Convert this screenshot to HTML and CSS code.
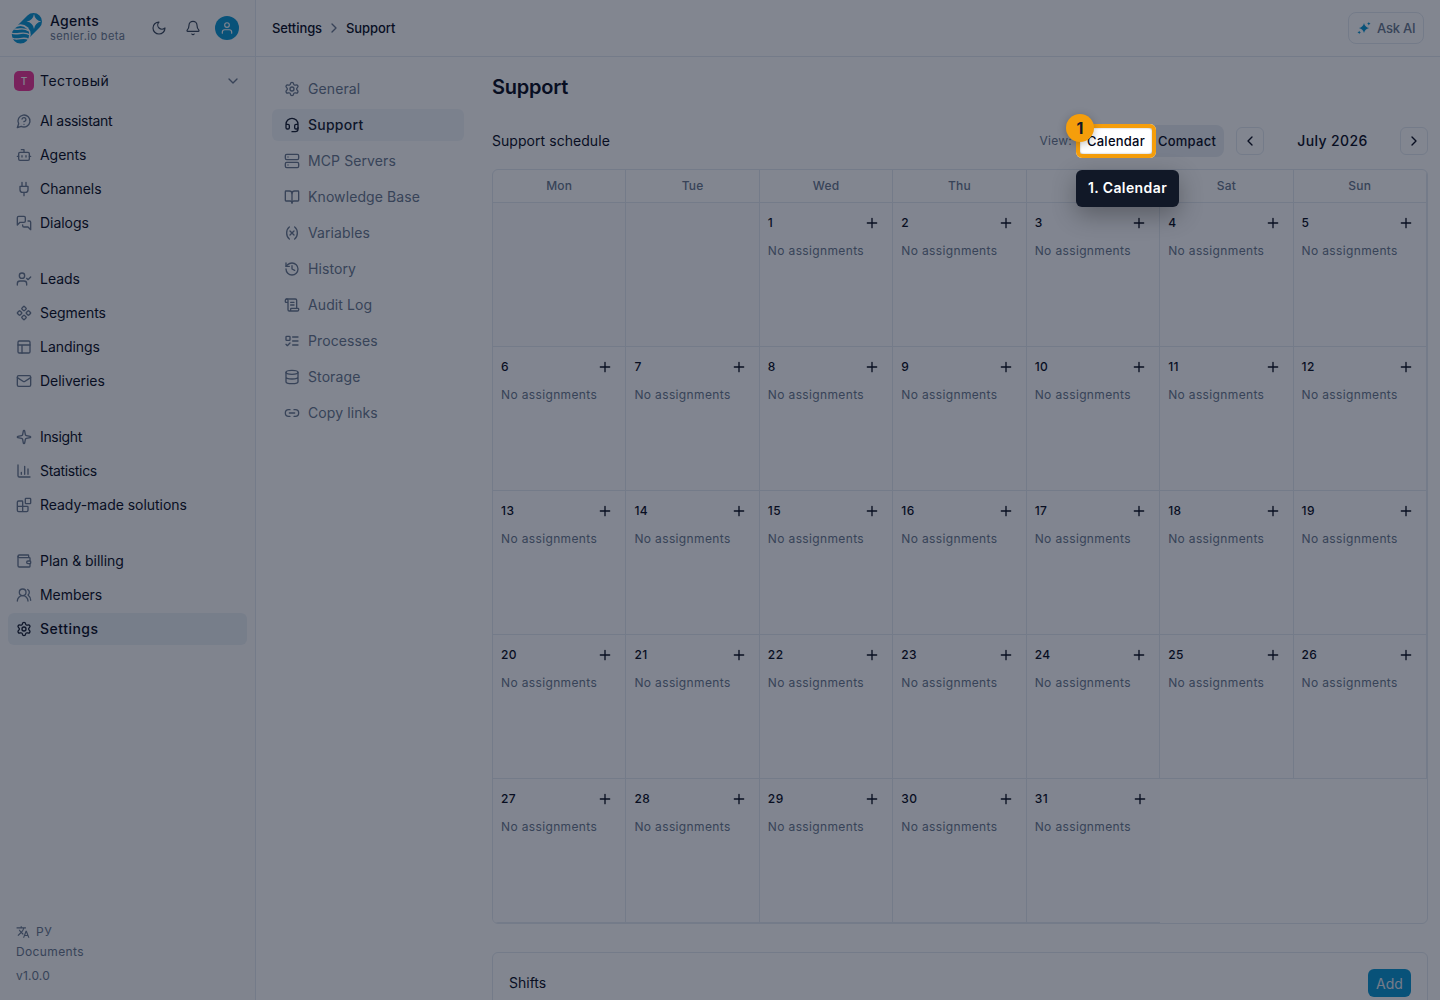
FILE: index.html
```
<!DOCTYPE html>
<html lang="en">
<head>
<meta charset="UTF-8">
<meta name="viewport" content="width=device-width, initial-scale=1.0">
<title>Support - Agents</title>
<link rel="stylesheet" href="styles.css">
</head>
<body>

<div class="app">
    <aside class="sidebar">
        <div class="brand">
            <svg class="logo" viewBox="0 0 32 32">
                <path class="capsule" d="M9.500 22.500L22.500 9.500"/>
                <circle class="cut" cx="9.500" cy="22.500" r="10.200"/>
                <circle class="fill" cx="9.500" cy="22.800" r="8.700"/>
                <path class="wave" d="M2 16.700C7 18.700 12 14.500 17.500 18.700M0 20.800C6 24.300 12 18 19 23M1 26C7 29.500 12 23.500 17.500 27.500"/>
                <path class="cut" d="M23 2Q24 8.500 30.500 9.500Q24 10.500 23 17Q22 10.500 15.500 9.500Q22 8.500 23 2Z"/>
            </svg>
            <div class="brand-text">
                <b>Agents</b>
                <span>senler.io beta</span>
            </div>
            <svg class="icon moon" viewBox="0 0 24 24"><path d="M12 3a6 6 0 0 0 9 9 9 9 0 1 1-9-9Z"/></svg>
            <svg class="icon bell" viewBox="0 0 24 24"><path d="M10.268 21a2 2 0 0 0 3.464 0"/><path d="M3.262 15.326A1 1 0 0 0 4 17h16a1 1 0 0 0 .74-1.673C19.410 13.956 18 12.499 18 8A6 6 0 0 0 6 8c0 4.499-1.411 5.956-2.738 7.326"/></svg>
            <div class="avatar"><svg class="icon" viewBox="0 0 24 24"><circle cx="12" cy="7" r="4"/><path d="M4 21v-2a4 4 0 0 1 4-4h8a4 4 0 0 1 4 4v2"/></svg></div>
        </div>

        <div class="workspace">
            <span class="badge">T</span>
            <span class="workspace-name">Тестовый</span>
            <svg class="icon" viewBox="0 0 24 24"><path d="m6 9 6 6 6-6"/></svg>
        </div>

        <nav class="menu">
            <div class="group">
                <a class="item tight"><svg class="icon" viewBox="0 0 24 24"><path d="M7.900 20A9 9 0 1 0 4 16.100L2 22Z"/><path d="M9.090 9a3 3 0 0 1 5.830 1c0 2-3 3-3 3"/><path d="M12 17h.01"/></svg>AI assistant</a>
                <a class="item"><svg class="icon" viewBox="0 0 24 24"><path d="M12 8V4H8"/><rect x="4" y="8" width="16" height="12" rx="2"/><path d="M2 14h2M20 14h2M15 13v2M9 13v2"/></svg>Agents</a>
                <a class="item"><svg class="icon" viewBox="0 0 24 24"><path d="M12 22v-5M9 8V2M15 8V2"/><path d="M18 8v5a4 4 0 0 1-4 4h-4a4 4 0 0 1-4-4V8Z"/></svg>Channels</a>
                <a class="item"><svg class="icon" viewBox="0 0 24 24"><path d="M14 9a2 2 0 0 1-2 2H6l-4 4V4a2 2 0 0 1 2-2h8a2 2 0 0 1 2 2Z"/><path d="M18 9h2a2 2 0 0 1 2 2v11l-4-4h-6a2 2 0 0 1-2-2v-1"/></svg>Dialogs</a>
            </div>
            <div class="group">
                <a class="item"><svg class="icon" viewBox="0 0 24 24"><path d="m16 11 2 2 4-4"/><path d="M16 21v-2a4 4 0 0 0-4-4H6a4 4 0 0 0-4 4v2"/><circle cx="9" cy="7" r="4"/></svg>Leads</a>
                <a class="item"><svg class="icon" viewBox="0 0 24 24"><path d="M15.536 11.293a1 1 0 0 0 0 1.414l2.376 2.377a1 1 0 0 0 1.414 0l2.377-2.377a1 1 0 0 0 0-1.414l-2.377-2.377a1 1 0 0 0-1.414 0z"/><path d="M2.297 11.293a1 1 0 0 0 0 1.414l2.377 2.377a1 1 0 0 0 1.414 0l2.377-2.377a1 1 0 0 0 0-1.414L6.088 8.916a1 1 0 0 0-1.414 0z"/><path d="M8.916 17.912a1 1 0 0 0 0 1.415l2.377 2.376a1 1 0 0 0 1.414 0l2.377-2.376a1 1 0 0 0 0-1.415l-2.377-2.376a1 1 0 0 0-1.414 0z"/><path d="M8.916 4.674a1 1 0 0 0 0 1.414l2.377 2.376a1 1 0 0 0 1.414 0l2.377-2.376a1 1 0 0 0 0-1.414l-2.377-2.377a1 1 0 0 0-1.414 0z"/></svg>Segments</a>
                <a class="item"><svg class="icon" viewBox="0 0 24 24"><rect x="3" y="3" width="18" height="18" rx="2"/><path d="M3 9h18M9 21V9"/></svg>Landings</a>
                <a class="item"><svg class="icon" viewBox="0 0 24 24"><rect x="2" y="4" width="20" height="16" rx="2"/><path d="m22 7-8.970 5.700a1.940 1.940 0 0 1-2.060 0L2 7"/></svg>Deliveries</a>
            </div>
            <div class="group">
                <a class="item tight"><svg class="icon" viewBox="0 0 24 24"><path d="M11.017 2.814a1 1 0 0 1 1.966 0l1.051 5.558a2 2 0 0 0 1.594 1.594l5.558 1.051a1 1 0 0 1 0 1.966l-5.558 1.051a2 2 0 0 0-1.594 1.594l-1.051 5.558a1 1 0 0 1-1.966 0l-1.051-5.558a2 2 0 0 0-1.594-1.594l-5.558-1.051a1 1 0 0 1 0-1.966l5.558-1.051a2 2 0 0 0 1.594-1.594z"/></svg>Insight</a>
                <a class="item tight"><svg class="icon" viewBox="0 0 24 24"><path d="M3 3v16a2 2 0 0 0 2 2h16M13 17V5M18 17V9M8 17v-3"/></svg>Statistics</a>
                <a class="item"><svg class="icon" viewBox="0 0 24 24"><path d="M10 22V7a1 1 0 0 0-1-1H4a2 2 0 0 0-2 2v12a2 2 0 0 0 2 2h12a2 2 0 0 0 2-2v-5a1 1 0 0 0-1-1H2"/><rect x="14" y="2" width="8" height="8" rx="1"/></svg>Ready-made solutions</a>
            </div>
            <div class="group">
                <a class="item"><svg class="icon" viewBox="0 0 24 24"><path d="M19 7V4a1 1 0 0 0-1-1H5a2 2 0 0 0 0 4h15a1 1 0 0 1 1 1v4h-3a2 2 0 0 0 0 4h3a1 1 0 0 0 1-1v-2a1 1 0 0 0-1-1"/><path d="M3 5v14a2 2 0 0 0 2 2h15a1 1 0 0 0 1-1v-4"/></svg>Plan &amp; billing</a>
                <a class="item"><svg class="icon" viewBox="0 0 24 24"><path d="M18 21a8 8 0 0 0-16 0"/><circle cx="10" cy="8" r="5"/><path d="M22 20c0-3.370-2-6.500-4-8a5 5 0 0 0-.450-8.300"/></svg>Members</a>
                <a class="item active"><svg class="icon" viewBox="0 0 24 24"><use href="#gear"/></svg>Settings</a>
            </div>
        </nav>

        <div class="footer">
            <div class="lang"><svg viewBox="0 0 24 24"><path d="M12.870 15.070l-2.540-2.510.03-.03A17.520 17.520 0 0 0 14.070 6H17V4h-7V2H8v2H1v2h11.170C11.500 7.920 10.440 9.750 9 11.350 8.070 10.320 7.300 9.190 6.690 8h-2c.73 1.630 1.730 3.170 2.980 4.560l-5.090 5.020L4 19l5-5 3.110 3.110.76-2.040zM18.500 10h-2L12 22h2l1.120-3h4.750L21 22h2l-4.500-12zm-2.620 7l1.620-4.330L19.120 17h-3.240z"/></svg>РУ</div>
            <div class="docs">Documents</div>
            <div class="version">v1.0.0</div>
        </div>
    </aside>

    <main class="main">
        <header class="topbar">
            <div class="crumbs">
                <span>Settings</span>
                <svg class="icon" viewBox="0 0 24 24"><path d="m9 18 6-6-6-6"/></svg>
                <span>Support</span>
            </div>
            <button class="ask"><svg viewBox="0 0 16 16"><path d="M8 2.200Q9 7 13.800 8Q9 9 8 13.800Q7 9 2.200 8Q7 7 8 2.200ZM13.500 1l.6 1.400 1.400.6-1.400.6-.6 1.400-.6-1.400L11.500 3l1.400-.6ZM2.500 11l.6 1.400 1.400.6-1.400.6-.6 1.400-.6-1.400L.5 13l1.400-.6Z"/></svg>Ask AI</button>
        </header>

        <div class="content">
            <nav class="subnav">
                <a class="item"><svg class="icon" viewBox="0 0 24 24"><g id="gear"><path d="M9.671 4.136a2.340 2.340 0 0 1 4.659 0 2.340 2.340 0 0 0 3.319 1.915 2.340 2.340 0 0 1 2.330 4.033 2.340 2.340 0 0 0 0 3.831 2.340 2.340 0 0 1-2.330 4.033 2.340 2.340 0 0 0-3.319 1.915 2.340 2.340 0 0 1-4.659 0 2.340 2.340 0 0 0-3.320-1.915 2.340 2.340 0 0 1-2.330-4.033 2.340 2.340 0 0 0 0-3.831A2.340 2.340 0 0 1 6.350 6.051a2.340 2.340 0 0 0 3.319-1.915"/><circle cx="12" cy="12" r="3"/></g></svg>General</a>
                <a class="item active"><svg class="icon" viewBox="0 0 24 24"><path d="M3 11h3a2 2 0 0 1 2 2v3a2 2 0 0 1-2 2H5a2 2 0 0 1-2-2v-5Zm0 0a9 9 0 1 1 18 0m0 0v5a2 2 0 0 1-2 2h-1a2 2 0 0 1-2-2v-3a2 2 0 0 1 2-2h3Z"/><path d="M21 16v2a4 4 0 0 1-4 4h-5"/></svg>Support</a>
                <a class="item"><svg class="icon" viewBox="0 0 24 24"><rect x="2" y="2" width="20" height="8" rx="2"/><rect x="2" y="14" width="20" height="8" rx="2"/><path d="M6 6h.01M6 18h.01"/></svg>MCP Servers</a>
                <a class="item"><svg class="icon" viewBox="0 0 24 24"><path d="M12 7v14"/><path d="M3 18a1 1 0 0 1-1-1V4a1 1 0 0 1 1-1h5a4 4 0 0 1 4 4 4 4 0 0 1 4-4h5a1 1 0 0 1 1 1v13a1 1 0 0 1-1 1h-6a3 3 0 0 0-3 3 3 3 0 0 0-3-3z"/></svg>Knowledge Base</a>
                <a class="item"><svg class="icon" viewBox="0 0 24 24"><path d="M8 21s-4-3-4-9 4-9 4-9M16 3s4 3 4 9-4 9-4 9M15 9l-6 6M9 9l6 6"/></svg>Variables</a>
                <a class="item"><svg class="icon" viewBox="0 0 24 24"><path d="M3 12a9 9 0 1 0 9-9 9.750 9.750 0 0 0-6.740 2.740L3 8"/><path d="M3 3v5h5M12 7v5l4 2"/></svg>History</a>
                <a class="item"><svg class="icon" viewBox="0 0 24 24"><path d="M15 12h-5M15 8h-5M19 17V5a2 2 0 0 0-2-2H4"/><path d="M8 21h12a2 2 0 0 0 2-2v-1a1 1 0 0 0-1-1H11a1 1 0 0 0-1 1v1a2 2 0 1 1-4 0V5a2 2 0 1 0-4 0v2a1 1 0 0 0 1 1h3"/></svg>Audit Log</a>
                <a class="item"><svg class="icon" viewBox="0 0 24 24"><rect x="3" y="5" width="6" height="6" rx="1"/><path d="m3 17 2 2 4-4M13 6h8M13 12h8M13 18h8"/></svg>Processes</a>
                <a class="item"><svg class="icon" viewBox="0 0 24 24"><ellipse cx="12" cy="5" rx="9" ry="3"/><path d="M3 5v14a9 3 0 0 0 18 0V5M3 12a9 3 0 0 0 18 0"/></svg>Storage</a>
                <a class="item"><svg class="icon" viewBox="0 0 24 24"><path d="M9 17H7A5 5 0 0 1 7 7h2M15 7h2a5 5 0 1 1 0 10h-2M8 12h8"/></svg>Copy links</a>
            </nav>

            <section class="page">
                <h1>Support</h1>
                <div class="toolbar">
                    <span class="toolbar-title">Support schedule</span>
                    <span class="view">View:</span>
                    <div class="toggle">
                        <button class="on">Calendar
                            <span class="spotlight"></span>
                            <span class="step">1</span>
                            <span class="tip">1. Calendar</span>
                        </button>
                        <button>Compact</button>
                    </div>
                    <button class="arrow"><svg class="icon" viewBox="0 0 24 24"><path d="m15 18-6-6 6-6"/></svg></button>
                    <span class="month">July 2026</span>
                    <button class="arrow"><svg class="icon" viewBox="0 0 24 24"><path d="m9 18 6-6-6-6"/></svg></button>
                </div>

                <div class="calendar" id="calendar"></div>

                <div class="shifts">
                    <span>Shifts</span>
                    <button>Add</button>
                </div>
            </section>
        </div>
    </main>
</div>

<script>
    var calendar = document.getElementById("calendar");
    var html = "";
    ["Mon", "Tue", "Wed", "Thu", "Fri", "Sat", "Sun"].forEach(function(name) {
        html += '<div class="weekday">' + name + '</div>';
    });

    // July 2026 starts on Wednesday
    html += '<div class="day empty"></div><div class="day empty"></div>';
    for (var d = 1; d <= 31; d++) {
        html += '<div class="day"><div class="day-head"><span>' + d + '</span>' +
            '<svg class="icon" viewBox="0 0 24 24"><path d="M5 12h14M12 5v14"/></svg></div>' +
            '<p>No assignments</p></div>';
    }
    calendar.innerHTML = html;
</script>

</body>
</html>
```
FILE: styles.css
```
* {
    box-sizing: border-box;
}
body {
    font-family: Inter, "Noto Sans", sans-serif;
    font-size: 14px;
    line-height: 20px;
    color: #020617;
    margin: 0;
    height: 100vh;
    overflow: hidden;
}
button {
    font-family: inherit;
    color: inherit;
    background: none;
    border: none;
    padding: 0;
}
.icon {
    width: 16px;
    height: 16px;
    flex: none;
    fill: none;
    stroke: currentColor;
    stroke-width: 2;
    stroke-linecap: round;
    stroke-linejoin: round;
}
.app {
    display: flex;
    height: 100vh;
    overflow: hidden;
}

/* Sidebar */
.sidebar {
    width: 256px;
    flex: none;
    display: flex;
    flex-direction: column;
    background: #fafafa;
    border-right: 1px solid #e2e8f0;
}
.brand {
    height: 57px;
    flex: none;
    display: flex;
    align-items: center;
    padding: 0 16px 1px 11px;
    border-bottom: 1px solid #e2e8f0;
}
.logo {
    width: 32px;
    height: 32px;
}
.fill {
    fill: #0092d0;
}
.capsule {
    stroke: #0092d0;
    stroke-width: 17;
    stroke-linecap: round;
}
.cut {
    fill: #fafafa;
}
.wave {
    fill: none;
    stroke: #fafafa;
    stroke-width: 1.4;
}
.brand-text {
    flex: 1;
    margin-left: 7px;
    padding-top: 2px;
}
.brand-text b {
    display: block;
    font-weight: 500;
    line-height: 16px;
    letter-spacing: 0.3px;
}
.brand-text span {
    display: block;
    font-size: 11px;
    line-height: 15px;
    letter-spacing: 0.4px;
    color: #64748b;
}
.moon, .bell {
    color: #334155;
    stroke-width: 1.75;
    margin-right: 18px;
}
.bell {
    margin-right: 14px;
}
.avatar {
    width: 24px;
    height: 24px;
    border-radius: 50%;
    background: #0092d0;
    color: #fafafa;
    display: flex;
    align-items: center;
    justify-content: center;
}
.avatar .icon {
    width: 14px;
    height: 14px;
}
.workspace {
    display: flex;
    align-items: center;
    height: 32px;
    margin-top: 8px;
    padding: 0 14px;
    color: #64748b;
}
.badge {
    width: 20px;
    height: 20px;
    border-radius: 5px;
    background: #ec2f92;
    color: #fafafa;
    font-size: 10px;
    font-weight: 500;
    text-align: center;
}
.workspace-name {
    flex: 1;
    margin-left: 6px;
    letter-spacing: 0.5px;
    color: #020617;
}
.menu {
    display: flex;
    flex-direction: column;
    gap: 24px;
    padding: 8px;
}
.group {
    display: flex;
    flex-direction: column;
    gap: 2px;
}
.item {
    display: flex;
    align-items: center;
    gap: 8px;
    height: 32px;
    padding: 0 8px;
    border-radius: 6px;
    letter-spacing: -0.04px;
}
.item.tight {
    letter-spacing: -0.33px;
}
.item .icon {
    color: #64748b;
}
.item.active {
    background: #e8eef3;
    font-weight: 500;
    letter-spacing: 0.5px;
}
.item.active .icon {
    color: #0f172a;
}
.footer {
    margin-top: auto;
    padding: 0 16px 12px;
    font-size: 12px;
    line-height: 24px;
    letter-spacing: 0.38px;
    color: #64748b;
}
.lang {
    display: flex;
    align-items: center;
    gap: 6px;
    height: 16px;
    letter-spacing: 0.7px;
}
.lang svg {
    width: 14px;
    height: 14px;
    fill: currentColor;
}
.version {
    letter-spacing: 0.2px;
}

/* Main */
.main {
    flex: 1;
    min-width: 0;
}
.topbar {
    height: 57px;
    display: flex;
    align-items: center;
    justify-content: space-between;
    padding: 0 16px;
    border-bottom: 1px solid #e2e8f0;
}
.crumbs {
    display: flex;
    align-items: center;
    gap: 4px;
    font-size: 13px;
    font-weight: 500;
    letter-spacing: -0.08px;
}
.crumbs .icon {
    color: #64748b;
}
.ask {
    display: flex;
    align-items: center;
    gap: 6px;
    height: 32px;
    width: 76px;
    padding: 0 8px;
    border: 1px solid #e2e8f0;
    border-radius: 8px;
    font-size: 13px;
    font-weight: 500;
    letter-spacing: -0.2px;
    color: #64748b;
    white-space: nowrap;
}
.ask svg {
    width: 14px;
    height: 14px;
    flex: none;
    fill: #0092d0;
}
.content {
    display: flex;
    padding: 16px 12px 0 16px;
}
.subnav {
    width: 192px;
    flex: none;
    display: flex;
    flex-direction: column;
    gap: 4px;
    margin-right: 28px;
}
.subnav .item {
    color: #64748b;
    padding: 0 12px;
    letter-spacing: 0.1px;
}
.subnav .item.active {
    color: #0f172a;
    background: #f1f5f9;
    letter-spacing: 0.25px;
}
.page {
    flex: 1;
    min-width: 0;
}
h1 {
    margin: 0;
    font-size: 20px;
    line-height: 28px;
    font-weight: 600;
    letter-spacing: -0.25px;
}
.toolbar {
    display: flex;
    align-items: center;
    height: 32px;
    margin: 24px 0 12px;
}
.toolbar-title {
    flex: 1;
    letter-spacing: 0.05px;
}
.view {
    font-size: 12px;
    letter-spacing: 0.25px;
    color: #64748b;
    margin-right: 4px;
}
.toggle {
    display: flex;
    width: 148px;
    height: 32px;
    padding: 3px;
    border-radius: 8px;
    background: #e8edf2;
}
.toggle button {
    flex: 1;
    font-size: 13px;
    font-weight: 500;
    letter-spacing: 0.25px;
}
.toggle .on {
    position: relative;
    flex: none;
    width: 74px;
    background: #fff;
    border-radius: 6px;
}
/* Guide step: dims the whole page around the highlighted button */
.spotlight {
    position: absolute;
    inset: -4px -3px -4px -3px;
    border: 4px solid #f59e0b;
    border-radius: 6px;
    box-shadow: 0 0 0 2000px rgba(15, 23, 42, 0.52), inset 0 0 2px rgba(15, 23, 42, 0.35);
    z-index: 1;
}
.step {
    position: absolute;
    left: -13px;
    top: -14px;
    width: 28px;
    height: 28px;
    border-radius: 50%;
    background: #f59e0b;
    color: #111827;
    font-size: 16px;
    font-weight: 700;
    line-height: 29px;
    box-shadow: 0 2px 8px rgba(0, 0, 0, 0.25);
    z-index: 2;
}
.tip {
    position: absolute;
    left: -3px;
    top: 42px;
    width: 103px;
    height: 37px;
    border-radius: 6px;
    background: #111827;
    color: #fff;
    font-size: 14px;
    font-weight: 600;
    line-height: 36px;
    letter-spacing: 0.4px;
    white-space: nowrap;
    box-shadow: 0 8px 24px rgba(0, 0, 0, 0.3);
    z-index: 2;
}
.arrow {
    display: flex;
    align-items: center;
    justify-content: center;
    width: 28px;
    height: 28px;
    margin-left: 12px;
    border: 1px solid #e2e8f0;
    border-radius: 6px;
}
.month {
    width: 136px;
    padding-left: 1px;
    text-align: center;
    font-weight: 500;
    letter-spacing: 0.4px;
}
.month + .arrow {
    margin-left: 0;
}

/* Calendar */
.calendar {
    display: grid;
    grid-template-columns: repeat(7, 1fr);
    grid-template-rows: 33px;
    grid-auto-rows: 144px;
    height: 755px;
    border: 1px solid #e2e8f0;
    border-radius: 6px;
    overflow: hidden;
}
.weekday, .day {
    border-right: 1px solid #e2e8f0;
    border-bottom: 1px solid #e2e8f0;
}
.weekday {
    font-size: 12px;
    font-weight: 500;
    line-height: 32px;
    text-align: center;
    letter-spacing: 0.25px;
    color: #64748b;
}
.day {
    padding: 8px;
    background: #fdfdfe;
}
.day:last-child {
    border-right: none;
}
.day.empty {
    background: #fafbfc;
}
.day-head {
    display: flex;
    align-items: center;
    justify-content: space-between;
    height: 24px;
    padding-right: 4px;
    font-size: 12px;
    font-weight: 500;
    letter-spacing: 0.4px;
}
.day p {
    margin: 8px 0 0;
    font-size: 12px;
    line-height: 16px;
    letter-spacing: 0.36px;
    color: #64748b;
    white-space: nowrap;
}
.shifts {
    display: flex;
    align-items: center;
    justify-content: space-between;
    height: 100px;
    margin-top: 28px;
    padding: 0 16px 38px;
    border: 1px solid #e2e8f0;
    border-radius: 6px;
}
.shifts button {
    width: 43px;
    height: 28px;
    border-radius: 6px;
    background: #0092d0;
    color: #e2e8f0;
    font-size: 14px;
}
```
